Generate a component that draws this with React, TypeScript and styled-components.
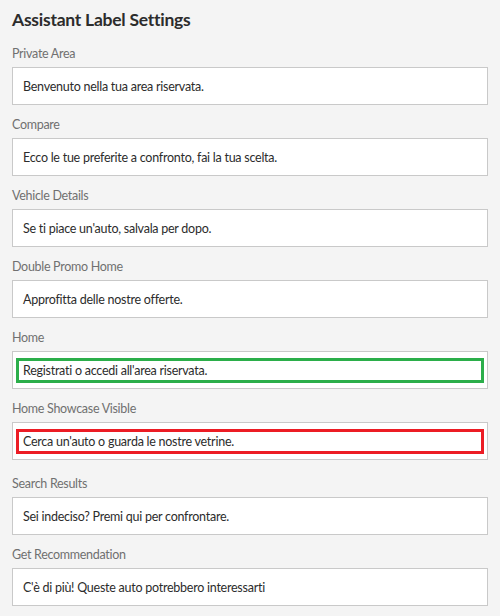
import React from 'react';
import styled, { createGlobalStyle } from 'styled-components';

const GlobalStyle = createGlobalStyle`
  html, body {
    margin: 0;
    padding: 0;
    background: #f4f4f4;
  }
  body {
    font-family: Lato, "Open Sans", sans-serif;
  }
`;

const Page = styled.div`
  padding: 8px 12px 0 12px;
  display: flex;
  flex-direction: column;
`;

const Title = styled.h1`
  margin: 0 0 11px 0;
  font-size: 17.5px;
  letter-spacing: -0.25px;
  line-height: 24px;
  font-weight: 700;
  color: #2c2c2c;
`;

const Field = styled.div<{ $extra?: boolean }>`
  display: flex;
  flex-direction: column;
  margin-bottom: ${(p) => (p.$extra ? '13px' : '9px')};
`;

const Label = styled.label`
  font-size: 12.5px;
  letter-spacing: -0.3px;
  line-height: 20px;
  color: #707070;
  margin: 1px 0 3px 0;
`;

const Box = styled.div`
  box-sizing: border-box;
  height: 38px;
  background: #fff;
  border: 1px solid #c9c9c9;
  padding: 0 3px;
  display: flex;
  align-items: center;
`;

const Value = styled.span<{ $highlight?: 'green' | 'red' }>`
  flex: 1;
  box-sizing: border-box;
  display: flex;
  align-items: center;
  font-size: 12.5px;
  letter-spacing: -0.25px;
  color: #2c2c2c;
  height: ${(p) => (p.$highlight ? '25px' : 'auto')};
  padding-left: ${(p) => (p.$highlight ? '4px' : '7px')};
  border: ${(p) =>
    p.$highlight === 'green'
      ? '3px solid #2bae4a'
      : p.$highlight === 'red'
      ? '3px solid #ec1c24'
      : 'none'};
`;

type Item = { label: string; value: string; highlight?: 'green' | 'red' };

const items: Item[] = [
  { label: 'Private Area', value: 'Benvenuto nella tua area riservata.' },
  { label: 'Compare', value: 'Ecco le tue preferite a confronto, fai la tua scelta.' },
  { label: 'Vehicle Details', value: "Se ti piace un'auto, salvala per dopo." },
  { label: 'Double Promo Home', value: 'Approfitta delle nostre offerte.' },
  { label: 'Home', value: "Registrati o accedi all'area riservata.", highlight: 'green' },
  { label: 'Home Showcase Visible', value: "Cerca un'auto o guarda le nostre vetrine.", highlight: 'red' },
  { label: 'Search Results', value: 'Sei indeciso? Premi qui per confrontare.' },
  { label: 'Get Recommendation', value: "C'è di più! Queste auto potrebbero interessarti" },
];

export default function App() {
  return (
    <>
      <GlobalStyle />
      <Page>
        <Title>Assistant Label Settings</Title>
        {items.map((it) => (
          <Field key={it.label} $extra={it.highlight === 'red'}>
            <Label>{it.label}</Label>
            <Box>
              <Value $highlight={it.highlight}>{it.value}</Value>
            </Box>
          </Field>
        ))}
      </Page>
    </>
  );
}
